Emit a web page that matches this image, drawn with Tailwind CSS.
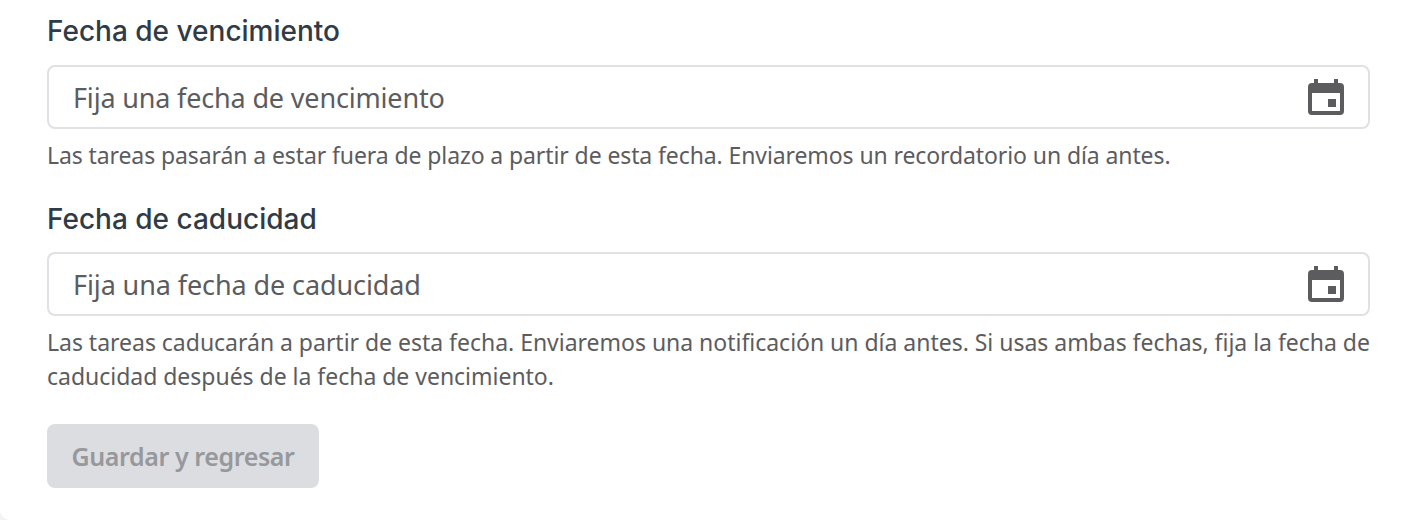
<!DOCTYPE html>
<html lang="es">
<head>
	<meta charset="UTF-8" />
	<title>Fechas</title>
	<script src="https://cdn.jsdelivr.net/npm/@tailwindcss/browser@4"></script>
</head>
<body class="bg-[#f3f3f4] h-[520px] overflow-hidden">
	<div class="h-[520px] bg-white rounded-bl-[10px] px-[47px] pt-[16px] font-['Noto_Sans',sans-serif]">
		<!-- Vencimiento -->
		<label class="block h-[30px] leading-[30px] font-medium text-[#303b47] font-['Inter',sans-serif] text-[28px]">Fecha de vencimiento</label>
		<div class="mt-[19px] h-[64px] w-[1323px] flex items-center justify-between border-2 border-[#e0e1e4] rounded-[8px] pl-[24px] pr-[24px]">
			<span class="pt-[2px] text-[27px] text-[#5c5c5e] tracking-[-0.17px]">Fija una fecha de vencimiento</span>
			<svg class="w-[36px] h-[36px]" viewBox="0 0 36 36" fill="#5c5c5e"><path fill-rule="evenodd" d="M6 0h4v4h16V0h4v4h2a4 4 0 0 1 4 4v24a4 4 0 0 1-4 4H4a4 4 0 0 1-4-4V8a4 4 0 0 1 4-4h2V0zM4 14v18h28V14H4zm16 6h8v8h-8v-8z"/></svg>
		</div>
		<p class="mt-[11px] text-[23px] leading-[30px] text-[#5c5c5e] tracking-[-0.1px]">Las tareas pasarán a estar fuera de plazo a partir de esta fecha. Enviaremos un recordatorio un día antes.</p>

		<!-- Caducidad -->
		<label class="block mt-[34px] h-[30px] leading-[30px] font-medium text-[#303b47] font-['Inter',sans-serif] text-[28px]">Fecha de caducidad</label>
		<div class="mt-[18px] h-[64px] w-[1323px] flex items-center justify-between border-2 border-[#e0e1e4] rounded-[8px] pl-[24px] pr-[24px]">
			<span class="pt-[2px] text-[27px] text-[#5c5c5e] tracking-[-0.1px]">Fija una fecha de caducidad</span>
			<svg class="w-[36px] h-[36px]" viewBox="0 0 36 36" fill="#5c5c5e"><path fill-rule="evenodd" d="M6 0h4v4h16V0h4v4h2a4 4 0 0 1 4 4v24a4 4 0 0 1-4 4H4a4 4 0 0 1-4-4V8a4 4 0 0 1 4-4h2V0zM4 14v18h28V14H4zm16 6h8v8h-8v-8z"/></svg>
		</div>
		<p class="mt-[9px] w-[1323px] text-[23px] leading-[34px] text-[#5c5c5e] tracking-[-0.02px]">Las tareas caducarán a partir de esta fecha. Enviaremos una notificación un día antes. Si usas ambas fechas, fija la fecha de caducidad después de la fecha de vencimiento.</p>

		<button class="mt-[31px] block w-[272px] h-[64px] pt-[2px] bg-[#dcdde1] rounded-[8px] text-[25px] font-semibold text-[#97989c] tracking-[-0.4px]">Guardar y regresar</button>
	</div>
</body>
</html>
